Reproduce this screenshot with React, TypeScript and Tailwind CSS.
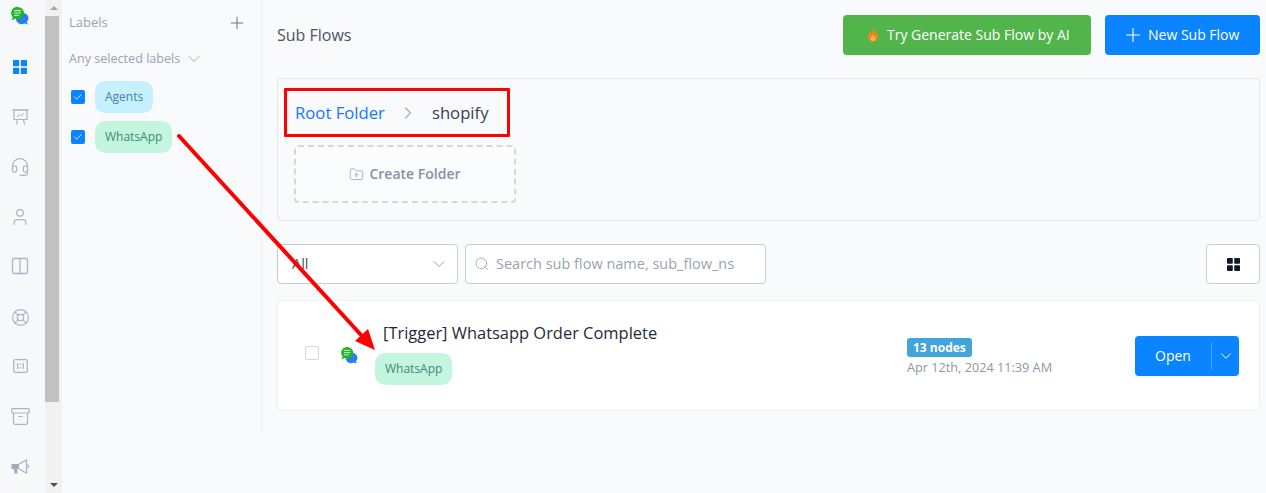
import React from "react";
import { Plus, ChevronDown, ChevronRight, Search, Check, Headset, User, Columns2, LifeBuoy, Archive, FolderUp } from "lucide-react";

function Logo({ size = 18 }: { size?: number }) {
  return (
    <svg width={size} height={size} viewBox="0 0 17 17">
      <path d="M7.5 7 a5.2 4.8 0 1 1 7.2 7.4 l1.6 2.2 l-3.6 -1 a5.2 4.8 0 0 1 -5.2 -8.6z" fill="#2b7de9" />
      <path d="M6.2 0 a6.1 5.7 0 0 1 0 11.4 a6.5 6.5 0 0 1 -2.2 -.3 L0.4 12.4 l1.3 -2.8 A5.7 5.7 0 0 1 6.2 0z" fill="#22b527" />
      <path d="M3 3.4h6.4M3 5.6h6.4M3 7.8h4.6" stroke="#c9f3cc" strokeWidth="1" />
    </svg>
  );
}

function Grid4({ color, size }: { color: string; size: number }) {
  return (
    <svg width={size} height={size} viewBox="0 0 14 14" fill={color}>
      <rect x="0" y="0" width="6.2" height="6.2" rx="0.8" />
      <rect x="7.8" y="0" width="6.2" height="6.2" rx="0.8" />
      <rect x="0" y="7.8" width="6.2" height="6.2" rx="0.8" />
      <rect x="7.8" y="7.8" width="6.2" height="6.2" rx="0.8" />
    </svg>
  );
}

function BarsBox() {
  return (
    <svg width="15" height="14" viewBox="0 0 15 14" fill="none" stroke="#aab6c8" strokeWidth="1.3">
      <rect x="0.7" y="0.7" width="13.6" height="12.6" rx="1.5" />
      <path d="M4.7 4v6M7.5 4.5v1.5M7.5 8v1.5M10.3 4v6" />
    </svg>
  );
}

function Board() {
  return (
    <svg width="17" height="16" viewBox="0 0 17 16" fill="none" stroke="#aab6c8" strokeWidth="1.2">
      <path d="M0.5 1h16" strokeWidth="1.6" />
      <path d="M2 1v9.5h13V1" />
      <path d="M5 8l2.5-2.5 2 1.5L12 4" strokeWidth="1" />
      <path d="M5.5 10.5L4.5 15.5M11.5 10.5l1 5" />
    </svg>
  );
}

function Horn() {
  return (
    <svg width="18" height="15" viewBox="0 0 18 15" fill="none">
      <path d="M0.5 5h7.5v5H6l0.5 4.5H3.5L3 10H0.5z" fill="#9eacc0" />
      <path d="M8 5L15.5 1v13L8 10" stroke="#aab6c8" strokeWidth="1.3" />
      <path d="M16 6h1.5v2.5H16" stroke="#aab6c8" strokeWidth="1" />
    </svg>
  );
}

function Fire() {
  return (
    <svg width="12" height="14" viewBox="0 0 12 15">
      <path d="M6 0.5 C7 3 11.5 5.5 11.5 9.5 A5.5 5.2 0 0 1 0.5 9.5 C0.5 7 2.2 5.8 3 4.2 C3.8 5 4.2 5.6 4.4 6.2 C5.4 4.6 6.2 2.6 6 0.5z" fill="#f5821f" />
      <path d="M6 7.5 C7 9 8.5 10 8.5 11.5 A2.5 2.5 0 0 1 3.5 11.5 C3.5 10 5.2 9.2 6 7.5z" fill="#fcc23d" />
    </svg>
  );
}

function LabelChip({ children, tone }: { children: React.ReactNode; tone: "blue" | "green" }) {
  return (
    <span
      className={
        "inline-flex h-8 items-center rounded-[10px] px-[10px] text-xs " +
        (tone === "blue" ? "bg-[#c5f1ff] text-[#4a7f9e]" : "bg-[#c3f5df] text-[#3f8a73]")
      }
    >
      {children}
    </span>
  );
}

function LabelRow({ children, tone }: { children: React.ReactNode; tone: "blue" | "green" }) {
  return (
    <div className="flex items-center gap-[10px] pl-[9px]">
      <span className="flex h-[14px] w-[14px] items-center justify-center rounded-[2px] bg-[#0a84ff]">
        <Check size={10} color="#ffffff" strokeWidth={2} />
      </span>
      <LabelChip tone={tone}>{children}</LabelChip>
    </div>
  );
}

export default function App() {
  const rail = "#aab6c8";
  const slot = "flex h-[20px] items-center justify-center";
  return (
    <div className="relative flex h-[493px] w-[1266px] overflow-hidden bg-[#f9fafc] font-['Open_Sans',sans-serif] text-[#1f2937]">
      {/* icon rail */}
      <div className="flex w-[45px] shrink-0 flex-col items-center bg-[#f7f8fa] pr-[5px] pt-[7px]">
        <Logo size={18} />
        <div className={slot + " mt-[32px]"}><Grid4 color="#0a84ff" size={14} /></div>
        <div className={slot + " mt-[30px]"}><Board /></div>
        <div className={slot + " mt-[30px]"}><Headset size={20} color={rail} strokeWidth={1.5} /></div>
        <div className={slot + " mt-[30px]"}><User size={20} color={rail} strokeWidth={1.5} /></div>
        <div className={slot + " mt-[29px]"}><Columns2 size={20} color={rail} strokeWidth={1.6} /></div>
        <div className={slot + " mt-[31px]"}><LifeBuoy size={19} color={rail} strokeWidth={1.5} /></div>
        <div className={slot + " mt-[29px]"}><BarsBox /></div>
        <div className={slot + " mt-[30px]"}><Archive size={21} color={rail} strokeWidth={1.4} /></div>
        <div className={slot + " mt-[30px]"}><Horn /></div>
      </div>

      {/* scrollbar */}
      <div className="flex w-[17px] shrink-0 flex-col items-center bg-[#f1f1f1]">
        <div className="flex h-[16px] w-full items-center justify-center">
          <span className="h-0 w-0 border-x-[4px] border-b-[4px] border-x-transparent border-b-[#a3a3a3]" />
        </div>
        <div className="mr-[3px] h-[386px] w-[14px] bg-[#c1c1c1]" />
        <div className="flex-1" />
        <div className="flex h-[16px] w-full items-center justify-center">
          <span className="h-0 w-0 border-x-[4px] border-t-[4px] border-x-transparent border-t-[#505050]" />
        </div>
      </div>

      {/* labels panel */}
      <div className="h-[433px] w-[200px] shrink-0 border-r border-[#f1f2f5]">
        <div className="flex h-[45px] items-center justify-between pl-[7px] pr-[14px] pt-[1px] text-[13px] text-[#9aa3b0]">
          <span>Labels</span>
          <Plus size={20} color="#6b7280" strokeWidth={1.2} />
        </div>
        <div className="flex h-[28px] items-center gap-[4px] pl-[7px] text-[12.6px] text-[#9aa3b0]">
          <span>Any selected labels</span>
          <ChevronDown size={20} color="#9aa3b0" strokeWidth={1.1} />
        </div>
        <div className="mt-[8px] flex flex-col gap-2">
          <LabelRow tone="blue">Agents</LabelRow>
          <LabelRow tone="green">WhatsApp</LabelRow>
        </div>
      </div>

      {/* main */}
      <div className="ml-[15px] w-[983px] shrink-0">
        <div className="flex h-[78px] items-start justify-between pt-[15px]">
          <div className="flex h-[40px] items-center text-base text-[#4b5563]">Sub Flows</div>
          <div className="flex gap-[14px]">
            <button className="flex h-[40px] w-[248px] items-center gap-[8px] rounded-[4px] bg-[#52b54b] pl-[24px] text-sm font-medium text-white">
              <Fire />
              Try Generate Sub Flow by AI
            </button>
            <button className="flex h-[40px] w-[155px] items-center gap-[4px] rounded-[4px] bg-[#0a84ff] pl-[17px] text-sm font-medium text-white">
              <Plus size={22} strokeWidth={1.2} />
              New Sub Flow
            </button>
          </div>
        </div>

        <div className="h-[143px] rounded-[4px] border border-[#e3e6eb] pl-[16px] pt-[20px]">
          <div className="flex h-[28px] items-center pl-[1px] text-[16.7px]">
            <span className="text-[#1677ff]">Root Folder</span>
            <ChevronRight size={20} color="#a3adba" strokeWidth={1.4} className="ml-[13px] mr-[14px]" />
            <span className="text-[#374151]">shopify</span>
          </div>
          <div className="mt-[18px] flex h-[58px] w-[222px] items-center justify-center gap-[5px] rounded-[4px] border-2 border-dashed border-[#d4d7dc] bg-[#fbfcfd] text-sm font-semibold text-[#8592a3]">
            <FolderUp size={15} color="#9aa5b5" strokeWidth={1.3} />
            Create Folder
          </div>
        </div>

        <div className="mt-[23px] flex h-[40px] items-stretch">
          <div className="flex w-[181px] items-center justify-between rounded-[4px] border border-[#c9cdd3] bg-white pl-[14px] pr-[8px] text-[14.5px] text-[#4b5563]">
            <span>All</span>
            <ChevronDown size={20} color="#9aa3b0" strokeWidth={1.2} />
          </div>
          <div className="ml-[7px] flex w-[301px] items-center gap-[6px] rounded-[4px] border border-[#c9cdd3] bg-white pl-[8px] text-[14.5px] text-[#9aa3b0]">
            <Search size={16} color="#9aa3b0" strokeWidth={1.3} />
            <span>Search sub flow name, sub_flow_ns</span>
          </div>
          <div className="flex-1" />
          <div className="flex w-[54px] items-center justify-center rounded-[4px] border border-[#c9cdd3] bg-white">
            <Grid4 color="#111827" size={13} />
          </div>
        </div>

        <div className="mt-[16px] flex h-[111px] items-center rounded-[4px] border border-[#eef0f3] bg-white">
          <span className="mb-[5px] ml-[27px] h-[14px] w-[14px] rounded-[2px] border border-[#d5d8de] bg-white" />
          <div className="ml-[22px]"><Logo size={17} /></div>
          <div className="ml-[17px] flex w-[532px] flex-col items-start pb-[4px]">
            <div className="pl-[8px] text-[16.45px] font-medium leading-[22px] text-[#1f2937]">[Trigger] Whatsapp Order Complete</div>
            <div className="mt-[9px]"><LabelChip tone="green">WhatsApp</LabelChip></div>
          </div>
          <div className="flex w-[228px] flex-col items-start pt-[3px]">
            <span className="flex h-[19px] items-center rounded-[3px] bg-[#43a4dc] px-[6px] text-xs font-bold text-white">13 nodes</span>
            <span className="mt-[1px] text-[12.7px] leading-[18px] text-[#9097a3]">Apr 12th, 2024 11:39 AM</span>
          </div>
          <div className="flex h-[40px] w-[104px] items-center rounded-[4px] bg-[#0a84ff] text-white">
            <span className="flex-1 text-center text-sm font-medium">Open</span>
            <span className="h-[28px] w-px bg-[#4aa5ff]" />
            <span className="flex w-[27px] justify-center"><ChevronDown size={18} strokeWidth={1.3} /></span>
          </div>
        </div>
      </div>

      {/* annotations */}
      <div className="pointer-events-none absolute left-[284px] top-[88px] h-[49px] w-[226px] rounded-[1px] border-[3px] border-[#ff0000]" />
      <svg className="pointer-events-none absolute left-0 top-0" width="1266" height="493">
        <line x1="179" y1="136" x2="362" y2="336" stroke="#ff0000" strokeWidth="4" strokeLinecap="round" />
        <polygon points="375,350 355,341 368,329" fill="#ff0000" />
      </svg>
    </div>
  );
}
